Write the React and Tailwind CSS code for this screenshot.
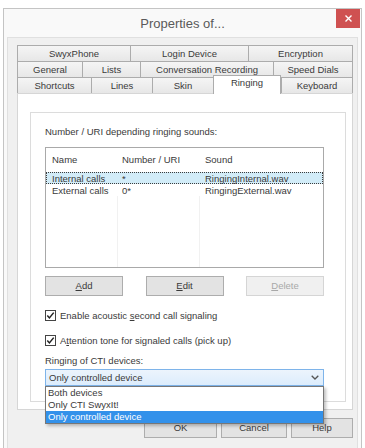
import React from "react";

const tabRows = [
  [
    { label: "SwyxPhone", w: "w-[113px]" },
    { label: "Login Device", w: "w-[118px]" },
    { label: "Encryption", w: "w-[105px]" },
  ],
  [
    { label: "General", w: "w-[65px]" },
    { label: "Lists", w: "w-[58px]" },
    { label: "Conversation Recording", w: "w-[133px]" },
    { label: "Speed Dials", w: "w-[80px]" },
  ],
  [
    { label: "Shortcuts", w: "w-[74px]" },
    { label: "Lines", w: "w-[61px]" },
    { label: "Skin", w: "w-[61px]" },
    { label: "Ringing", w: "w-[68px]", active: true },
    { label: "Keyboard", w: "w-[72px]" },
  ],
];

const sounds = [
  { name: "Internal calls", number: "*", sound: "RingingInternal.wav", selected: true },
  { name: "External calls", number: "0*", sound: "RingingExternal.wav" },
];

const ctiOptions = ["Both devices", "Only CTI SwyxIt!", "Only controlled device"];

function Tab({ label, w, active, last }) {
  if (active) {
    return (
      <div
        className={`${w} relative z-10 -mb-px flex h-[19px] items-start justify-center border-l border-r border-t border-[#acacac] bg-white pt-[1px]`}
      >
        {label}
      </div>
    );
  }
  return (
    <div
      className={`${w} flex h-[16px] items-center justify-center border-l border-t border-[#acacac] bg-gradient-to-b from-[#f5f5f5] to-[#e7e7e7] ${last ? "border-r" : ""}`}
    >
      {label}
    </div>
  );
}

function CheckBox() {
  return (
    <svg width="11" height="11" viewBox="0 0 11 11" className="shrink-0">
      <rect x="0.5" y="0.5" width="10" height="10" fill="#fff" stroke="#444" />
      <path d="M2.3 5.6 L4.4 7.9 L8.7 2.6" fill="none" stroke="#222" strokeWidth="1.5" />
    </svg>
  );
}

function Button({ children, w, h = "h-[20px]", disabled }) {
  return (
    <div
      className={`${w} ${h} flex items-center justify-center border ${
        disabled ? "border-[#d5d5d5] bg-[#f0f0f0] text-[#a8a8a8]" : "border-[#adadad] bg-[#e3e3e3]"
      }`}
    >
      {children}
    </div>
  );
}

export default function App() {
  return (
    <div className="h-[448px] w-[365px] overflow-hidden bg-white px-[3px] pt-[8px] font-['Liberation_Sans',Arial,sans-serif] text-[9.5px] leading-[12px] text-[#3a3a3a]">
      {/* Window */}
      <div className="h-[460px] border border-[#c4c4c4] bg-[#f9f9f9]">
        {/* Title bar */}
        <div className="grid h-[28px] grid-cols-[1fr_auto_1fr]">
          <div />
          <div className="self-center pt-[1px] text-[13px] leading-[16px] text-[#5a5a5a]">Properties of...</div>
          <div className="flex justify-end pr-[1px]">
            <div className="flex h-[19px] w-[24px] items-center justify-center bg-[#cf5151]">
              <svg width="7" height="7" viewBox="0 0 7 7">
                <path d="M0.5 0.5 L6.5 6.5 M6.5 0.5 L0.5 6.5" stroke="#fff" strokeWidth="1.4" />
              </svg>
            </div>
          </div>
        </div>

        {/* Client area */}
        <div className="mx-[3px] h-[430px] border border-[#e0e0e0] bg-[#f0f0f0] pl-[9px] pr-[4px] pt-[7px]">
          {/* Tabs */}
          {tabRows.map((row, ri) => (
            <div key={ri} className="flex h-[16px] items-end">
              {row.map((t, ti) => (
                <Tab key={t.label} {...t} last={ti === row.length - 1} />
              ))}
            </div>
          ))}

          {/* Tab page */}
          <div className="h-[317px] border border-[#d6d6d6] bg-white pl-[12px] pt-[18px]">
            <div className="h-[290px] w-[316px] border border-[#dcdcdc] bg-white pl-[14px] pt-[13px]">
              <div>Number / URI depending ringing sounds:</div>

              {/* List view */}
              <div className="mt-[9px] flex h-[121px] w-[279px] flex-col border border-[#a9a9a9] bg-white">
                <div className="grid h-[24px] grid-cols-[72px_82px_1fr] items-center">
                  <div className="pl-[6px]">Name</div>
                  <div className="pl-[4px]">Number / URI</div>
                  <div className="pl-[5px]">Sound</div>
                </div>
                {sounds.map((s) => (
                  <div
                    key={s.name}
                    className={`grid h-[12px] grid-cols-[72px_82px_1fr] items-center ${
                      s.selected ? "border border-dotted border-[#3c3c3c] bg-[#d2ecf8]" : "border border-transparent"
                    }`}
                  >
                    <div className="pl-[5px]">{s.name}</div>
                    <div className="pl-[3px]">{s.number}</div>
                    <div className="pl-[4px]">{s.sound}</div>
                  </div>
                ))}
                <div className="grid flex-1 grid-cols-[72px_82px_1fr]">
                  <div className="border-r border-[#f1f1f1]" />
                  <div className="border-r border-[#f1f1f1]" />
                  <div />
                </div>
              </div>

              {/* Buttons */}
              <div className="mt-[8px] flex w-[279px] justify-between">
                <Button w="w-[78px]">
                  <span className="underline">A</span>dd
                </Button>
                <Button w="w-[78px]">
                  <span className="underline">E</span>dit
                </Button>
                <Button w="w-[78px]" disabled>
                  <span className="underline">D</span>elete
                </Button>
              </div>

              {/* Checkboxes */}
              <div className="mt-[13px] flex h-[13px] items-center gap-[4px]">
                <CheckBox />
                <span>
                  Enable acoustic <span className="underline">s</span>econd call signaling
                </span>
              </div>
              <div className="mt-[12px] flex h-[13px] items-center gap-[4px]">
                <CheckBox />
                <span>
                  A<span className="underline">t</span>tention tone for signaled calls (pick up)
                </span>
              </div>

              <div className="mt-[8px]">Ringing of CTI devices:</div>

              {/* Combo box */}
              <div className="relative mt-[2px] w-[279px]">
                <div className="flex h-[17px] items-center justify-between border border-[#7eb4ea] bg-gradient-to-b from-[#ecf4fc] to-[#dcecfc] pl-[3px] pr-[4px]">
                  <span>Only controlled device</span>
                  <svg width="8" height="5" viewBox="0 0 8 5">
                    <path d="M0.7 0.7 L4 4 L7.3 0.7" fill="none" stroke="#555" strokeWidth="1.3" />
                  </svg>
                </div>
                <div className="absolute left-0 top-full z-20 w-[279px] border border-[#777] bg-white shadow-[2px_2px_3px_rgba(0,0,0,0.25)]">
                  {ctiOptions.map((o, i) => (
                    <div
                      key={o}
                      className={`h-[12px] pl-[2px] ${i === ctiOptions.length - 1 ? "bg-[#3391ea] text-white" : ""}`}
                    >
                      {o}
                    </div>
                  ))}
                </div>
              </div>
            </div>
          </div>

          {/* Dialog buttons */}
          <div className="mt-[8px] flex justify-end gap-[4px]">
            <Button w="w-[73px]">OK</Button>
            <Button w="w-[66px]">Cancel</Button>
            <Button w="w-[62px]">Help</Button>
          </div>
        </div>
      </div>
    </div>
  );
}
